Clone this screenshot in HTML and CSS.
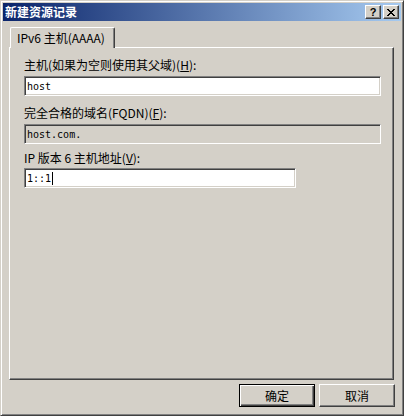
FILE: index.html
```html
<!DOCTYPE html>
<html lang="zh-CN">
<head>
  <meta charset="UTF-8">
  <title>新建资源记录</title>
  <link rel="stylesheet" href="styles.css">
</head>
<body>
  <div class="window">
    <div class="titlebar">
      <span class="title">新建资源记录</span>
      <div class="caption-btns">
        <span class="cbtn help">?</span>
        <span class="cbtn close">
          <svg width="8" height="7" viewBox="0 0 8 7" shape-rendering="crispEdges">
            <path d="M0 0h2v1h-2zM6 0h2v1h-2zM1 1h2v1h-2zM5 1h2v1h-2zM2 2h4v1h-4zM3 3h2v1h-2zM2 4h4v1h-4zM1 5h2v1h-2zM5 5h2v1h-2zM0 6h2v1h-2zM6 6h2v1h-2z" fill="#000"/>
          </svg>
        </span>
      </div>
    </div>

    <div class="client">
      <div class="tabs">
        <div class="tab">IPv6 主机(AAAA)</div>
      </div>

      <div class="panel">
        <div class="group">
          <div class="lbl">主机(如果为空则使用其父域)(<u>H</u>):</div>
          <div class="field">host</div>
        </div>
        <div class="group">
          <div class="lbl">完全合格的域名(FQDN)(<u>F</u>):</div>
          <div class="field readonly">host.com.</div>
        </div>
        <div class="group group-ip">
          <div class="lbl">IP 版本 6 主机地址(<u>V</u>):</div>
          <div class="field short">1::1<span class="caret"></span></div>
        </div>
      </div>

      <div class="buttons">
        <button class="btn default">确定</button>
        <button class="btn">取消</button>
      </div>
    </div>
  </div>
</body>
</html>
```

FILE: styles.css
```css
body {
  margin: 0;
  background-color: #d4d0c8;
  font-family: "Noto Sans CJK SC", "DejaVu Sans", sans-serif;
  font-size: 12px;
  color: #000;
}

.window {
  box-sizing: border-box;
  width: 404px;
  height: 416px;
  border: 1px solid;
  border-color: #d4d0c8 #404040 #404040 #d4d0c8;
  box-shadow: inset 1px 1px #fff, inset -1px -1px #808080;
  padding: 2px;
  display: flex;
  flex-direction: column;
}

.titlebar {
  height: 18px;
  background: linear-gradient(to right, #0a246a, #a6caf0);
  display: flex;
  align-items: center;
  justify-content: space-between;
  padding: 0 2px;
}

.title {
  color: #fff;
  font-weight: bold;
  font-size: 12px;
  line-height: 18px;
}

.caption-btns {
  display: flex;
  gap: 2px;
}

.cbtn {
  box-sizing: border-box;
  width: 16px;
  height: 14px;
  background-color: #d4d0c8;
  border: 1px solid;
  border-color: #fff #404040 #404040 #fff;
  box-shadow: inset -1px -1px #808080;
  display: flex;
  align-items: center;
  justify-content: center;
}

.help {
  font-family: "Liberation Sans", sans-serif;
  font-weight: bold;
  font-size: 11px;
  line-height: 12px;
}

.client {
  flex: 1;
  display: flex;
  flex-direction: column;
}

.tabs {
  margin-top: 6px;
  padding-left: 7px;
  display: flex;
  position: relative;
  z-index: 1;
}

.tab {
  box-sizing: border-box;
  width: 105px;
  height: 21px;
  margin-bottom: -1px;
  padding: 3px 0 0 6px;
  background-color: #d4d0c8;
  border: 1px solid;
  border-bottom: none;
  border-color: #fff #404040 #d4d0c8 #fff;
  border-radius: 2px 2px 0 0;
  box-shadow: inset -1px 0 #808080;
  line-height: 14px;
  white-space: nowrap;
}

.panel {
  box-sizing: border-box;
  height: 333px;
  margin: 0 7px 0 6px;
  padding: 10px 0 0 14px;
  border: 1px solid;
  border-color: #fff #404040 #404040 #fff;
  box-shadow: inset -1px -1px #808080;
}

.group + .group {
  margin-top: 10px;
}

.group.group-ip {
  margin-top: 7px;
}

.lbl {
  height: 14px;
  line-height: 14px;
  white-space: nowrap;
}

.field {
  box-sizing: border-box;
  width: 357px;
  height: 20px;
  margin-top: 4px;
  padding: 0 2px;
  background-color: #fff;
  border: 1px solid;
  border-color: #808080 #fff #fff #808080;
  box-shadow: inset 1px 1px #404040, inset -1px -1px #d4d0c8;
  font-family: "DejaVu Sans Mono", "Liberation Mono", monospace;
  font-size: 10px;
  line-height: 17px;
  display: flex;
  align-items: center;
}

.group-ip .field {
  margin-top: 3px;
}

.field.readonly {
  background-color: #d4d0c8;
}

.field.short {
  width: 272px;
}

.caret {
  display: inline-block;
  width: 1px;
  height: 13px;
  margin-left: 1px;
  background-color: #000;
}

.buttons {
  display: flex;
  justify-content: flex-end;
  gap: 4px;
  margin-top: 4px;
  padding-right: 6px;
}

.btn {
  box-sizing: border-box;
  width: 76px;
  height: 23px;
  padding: 0;
  font-family: inherit;
  font-size: 12px;
  background-color: #d4d0c8;
  border: 1px solid;
  border-color: #fff #404040 #404040 #fff;
  box-shadow: inset -1px -1px #808080;
  color: #000;
}

.btn.default {
  border-color: #000;
  box-shadow: inset 1px 1px #fff, inset -1px -1px #404040, inset -2px -2px #808080;
}
```
